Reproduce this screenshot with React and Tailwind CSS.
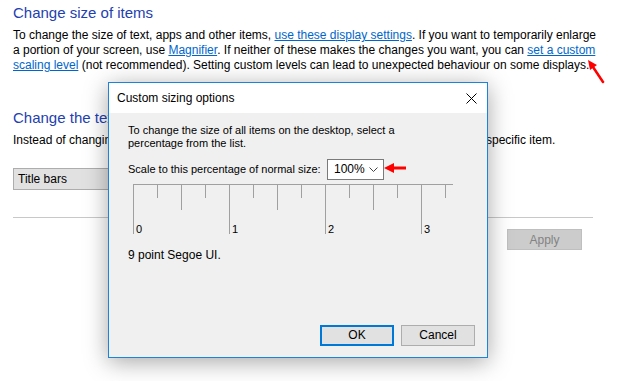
import React from "react";

const FONT = { fontFamily: '"Liberation Sans", Arial, sans-serif' };

function Ruler() {
  const ticks = [];
  for (let i = 0; i < 14; i++) {
    const x = 5.5 + i * 24;
    const y2 = i % 4 === 0 ? 51 : i % 2 === 0 ? 27 : 15;
    ticks.push(<line key={i} x1={x} y1={1} x2={x} y2={y2} stroke="#a0a0a0" strokeWidth="1" />);
  }
  return (
    <svg width="330" height="52" className="block">
      <line x1="5" y1="1.5" x2="325" y2="1.5" stroke="#a0a0a0" strokeWidth="1" />
      {ticks}
      {[0, 1, 2, 3].map((n) => (
        <text key={n} x={8 + n * 96} y="50" fontSize="11" fill="#000" style={FONT}>
          {n}
        </text>
      ))}
    </svg>
  );
}

function Dialog() {
  return (
    <div className="absolute left-[108px] top-[82px] w-[380px] h-[276px] border border-[#1c84d8] bg-[#f0f0f0] flex flex-col shadow-[0_4px_22px_rgba(0,0,0,0.35)]">
      <div className="h-[30px] bg-white flex items-center justify-between pl-[8px] pr-[10px] text-[12px]">
        <span>Custom sizing options</span>
        <svg width="11" height="11" viewBox="0 0 11 11">
          <path d="M0.5 0.5 L10.5 10.5 M10.5 0.5 L0.5 10.5" stroke="#000" strokeWidth="1" />
        </svg>
      </div>
      <div className="flex-1 flex flex-col pl-[19px] pt-[11px] text-[11px] leading-[13px]">
        <p>
          To change the size of all items on the desktop, select a
          <br />
          percentage from the list.
        </p>
        <div className="flex items-center mt-[9px]">
          <span className="w-[199px] whitespace-nowrap">Scale to this percentage of normal size:</span>
          <div className="w-[57px] h-[21px] bg-white border border-[#7a7a7a] flex items-center justify-between pl-[6px] pr-[5px] text-[12px]">
            <span>100%</span>
            <svg width="9" height="6" viewBox="0 0 9 6">
              <path d="M0.5 0.5 L4.5 4.5 L8.5 0.5" fill="none" stroke="#444" strokeWidth="1" />
            </svg>
          </div>
        </div>
        <div className="mt-[3px]">
          <Ruler />
        </div>
        <p className="mt-[14px] text-[12px]">9 point Segoe UI.</p>
        <div className="mt-auto mb-[11px] flex justify-end gap-[7px] pr-[12px]">
          <button className="w-[74px] h-[21px] border-2 border-[#0078d7] bg-[#e1e1e1] text-[12px]">OK</button>
          <button className="w-[74px] h-[21px] border border-[#adadad] bg-[#e1e1e1] text-[12px]">Cancel</button>
        </div>
      </div>
    </div>
  );
}

export default function App() {
  return (
    <div className="relative w-[639px] h-[381px] bg-white overflow-hidden text-black" style={FONT}>
      <div className="px-[13px] pt-[3px] w-[606px]">
        <h1 className="text-[15px] leading-[20px] text-[#2340b0]">Change size of items</h1>
        <p className="mt-[5px] text-[12px] leading-[15px] whitespace-nowrap">
          To change the size of text, apps and other items,{" "}
          <a className="text-[#0066cc] underline">use these display settings</a>. If you want to temporarily enlarge
          <br />
          a portion of your screen, use <a className="text-[#0066cc] underline">Magnifier</a>. If neither of these
          makes the changes you want, you can <a className="text-[#0066cc] underline">set a custom</a>
          <br />
          <a className="text-[#0066cc] underline">scaling level</a> (not recommended). Setting custom levels can lead
          to unexpected behaviour on some displays.
        </p>
        <h2 className="mt-[35px] text-[15px] leading-[20px] text-[#2340b0]">Change the text size only</h2>
        <p className="mt-[5px] text-[12px] leading-[15px] whitespace-nowrap">
          Instead of changing the size of everything on the desktop, change only the text size for a specific item.
        </p>
        <div className="mt-[20px] flex items-center gap-[8px] text-[12px]">
          <div className="w-[160px] h-[22px] bg-[#e1e1e1] border border-[#adadad] flex items-center pl-[4px]">
            Title bars
          </div>
          <div className="w-[60px] h-[22px] bg-[#e1e1e1] border border-[#adadad] flex items-center pl-[4px]">9</div>
          <span>Bold</span>
        </div>
        <div className="mt-[27px] border-t border-[#c8c8c8]" />
        <div className="mt-[11px] flex justify-end pr-[11px]">
          <button className="w-[75px] h-[21px] bg-[#cccccc] border border-[#bfbfbf] text-[#838383] text-[12px]">
            Apply
          </button>
        </div>
      </div>

      <Dialog />

      <svg className="absolute left-[383px] top-[162px]" width="24" height="12" viewBox="0 0 24 12">
        <polygon points="1,6 11,1 11,11" fill="#ff0000" />
        <rect x="10" y="4.5" width="13" height="3" fill="#ff0000" />
      </svg>
      <svg className="absolute left-[584px] top-[56px]" width="24" height="30" viewBox="0 0 24 30">
        <line x1="19" y1="26" x2="9" y2="11" stroke="#ff0000" strokeWidth="2.5" strokeLinecap="round" />
        <polygon points="4,4 13,9 6,14" fill="#ff0000" />
      </svg>
    </div>
  );
}
